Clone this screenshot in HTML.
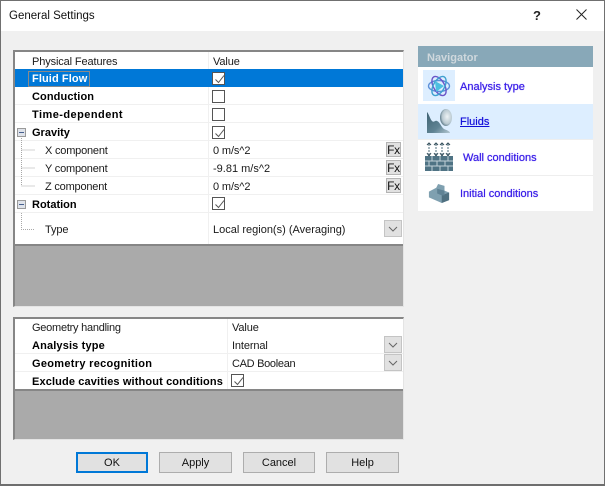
<!DOCTYPE html>
<html><head><meta charset="utf-8">
<style>
html,body{margin:0;padding:0;width:605px;height:486px;overflow:hidden;background:#f0f0f0}
body{position:relative;font-family:"Liberation Sans",sans-serif;font-size:11px;color:#1a1a1a}
#w{left:0;top:0;width:605px;height:486px;filter:blur(.3px)}
div,span,a{position:absolute;box-sizing:border-box}
.t{white-space:nowrap;line-height:14px;height:14px;letter-spacing:-.12px}
.b{font-weight:bold;color:#000;letter-spacing:.1px}
.l{height:1px;background:#f0f0f0}
.cb{width:13px;height:13px;border:1px solid #555;background:#fff}
.cb svg{position:absolute;left:1px;top:1px}
.fx{left:386px;width:15px;height:15px;background:#e1e1e1;border:1px solid #b4b4b4;font-size:12px;line-height:14px;text-align:center;color:#111;letter-spacing:-.3px}
.dd{left:384px;width:18px;height:17px;background:#e1e1e1;border:1px solid #c4c4c4}
.dd svg{position:absolute;left:3px;top:5px}
.btn{top:452px;height:21px;background:#e1e1e1;border:1px solid #adadad;text-align:center;line-height:20px;font-size:11px;color:#111}
.exp{left:17px;width:9px;height:9px;background:#dfe3ea;border:1px solid #9a9a9a}
.exp i{position:absolute;left:1px;top:3px;width:5px;height:1px;background:#47608f}
.nav{left:460px;font-size:11px;color:#3a1ee8;line-height:14px;height:14px;white-space:nowrap;text-shadow:0 0 .6px #3a1ee8}
</style></head><body><div id="w">
<!-- window chrome -->
<div style="left:0;top:0;width:605px;height:31px;background:#fff"></div>
<div style="left:0;top:0;width:605px;height:1px;background:#707070"></div>
<div style="left:0;top:0;width:1px;height:486px;background:#707070"></div>
<div style="left:604px;top:0;width:1px;height:486px;background:#707070"></div>
<div style="left:0;top:484px;width:605px;height:2px;background:#6e6e6e"></div>
<div class="t" style="left:9px;top:9px;font-size:11.5px;line-height:15px;height:15px;color:#111;letter-spacing:0">General Settings</div>
<div class="t" style="left:533px;top:8px;font-size:13px;line-height:15px;height:15px;color:#222;font-weight:bold;letter-spacing:0">?</div>
<svg style="position:absolute;left:576px;top:9px" width="11" height="11"><path d="M.5.5l10 10M10.5.5l-10 10" stroke="#222" fill="none"/></svg>

<!-- panel 1 -->
<div style="left:13px;top:50px;width:391px;height:257px;background:#aaa;border:2px solid #868686;border-right:1px solid #e4e4e4;border-bottom:1px solid #e4e4e4"></div>
<div style="left:15px;top:52px;width:388px;height:192px;background:#fff"></div>
<div style="left:15px;top:244px;width:388px;height:2px;background:#868686"></div>
<div style="left:15px;top:69px;width:388px;height:18px;background:#0078d7"></div>
<div style="left:208px;top:52px;width:1px;height:17px;background:#f0f0f0"></div>
<div style="left:208px;top:87px;width:1px;height:157px;background:#f0f0f0"></div>
<div class="l" style="left:15px;top:104px;width:388px"></div>
<div class="l" style="left:15px;top:122px;width:388px"></div>
<div class="l" style="left:15px;top:140px;width:388px"></div>
<div class="l" style="left:15px;top:158px;width:388px"></div>
<div class="l" style="left:15px;top:176px;width:388px"></div>
<div class="l" style="left:15px;top:194px;width:388px"></div>
<div class="l" style="left:15px;top:212px;width:388px"></div>
<!-- focus rectangle -->
<div style="left:28px;top:71px;width:62px;height:16px;border:1px solid #8a8a8a"></div>

<div class="t" style="left:32px;top:55px">Physical Features</div>
<div class="t b" style="left:32px;top:72px;color:#fff">Fluid Flow</div>
<div class="t b" style="left:32px;top:90px">Conduction</div>
<div class="t b" style="left:32px;top:108px;letter-spacing:.45px">Time-dependent</div>
<div class="t b" style="left:32px;top:126px;letter-spacing:0">Gravity</div>
<div class="t" style="left:45px;top:144px;letter-spacing:-.2px">X component</div>
<div class="t" style="left:45px;top:162px;letter-spacing:-.2px">Y component</div>
<div class="t" style="left:45px;top:180px;letter-spacing:-.2px">Z component</div>
<div class="t b" style="left:32px;top:198px;letter-spacing:0">Rotation</div>
<div class="t" style="left:45px;top:223px">Type</div>

<div class="t" style="left:213px;top:55px">Value</div>
<div class="t" style="left:213px;top:144px">0 m/s^2</div>
<div class="t" style="left:213px;top:162px;letter-spacing:0">-9.81 m/s^2</div>
<div class="t" style="left:213px;top:180px">0 m/s^2</div>
<div class="t" style="left:213px;top:223px;letter-spacing:0">Local region(s) (Averaging)</div>

<div class="cb" style="left:212px;top:72px"><svg width="11" height="11"><path d="M1.5 5.5l3 3 5.5-7" stroke="#555" fill="none"/></svg></div>
<div class="cb" style="left:212px;top:90px"></div>
<div class="cb" style="left:212px;top:108px"></div>
<div class="cb" style="left:212px;top:126px"><svg width="11" height="11"><path d="M1.5 5.5l3 3 5.5-7" stroke="#555" fill="none"/></svg></div>
<div class="cb" style="left:212px;top:197px"><svg width="11" height="11"><path d="M1.5 5.5l3 3 5.5-7" stroke="#555" fill="none"/></svg></div>

<div class="fx" style="top:142px">Fx</div>
<div class="fx" style="top:160px">Fx</div>
<div class="fx" style="top:178px">Fx</div>
<div class="dd" style="top:220px"><svg width="10" height="6"><path d="M1 1l4 4 4-4" stroke="#666" fill="none"/></svg></div>

<div class="exp" style="top:128px"><i></i></div>
<div class="exp" style="top:200px"><i></i></div>
<svg style="position:absolute;left:20px;top:137px" width="20" height="104">
<path d="M1.5 1V49M1.5 13H15M1.5 31H15M1.5 49H15M1.5 76V92.5H15" stroke="#a8a8a8" stroke-dasharray="1 1" fill="none"/>
</svg>

<!-- panel 2 -->
<div style="left:13px;top:317px;width:391px;height:123px;background:#aaa;border:2px solid #868686;border-right:1px solid #e4e4e4;border-bottom:1px solid #e4e4e4"></div>
<div style="left:15px;top:319px;width:388px;height:70px;background:#fff"></div>
<div style="left:15px;top:389px;width:388px;height:2px;background:#868686"></div>
<div style="left:227px;top:319px;width:1px;height:70px;background:#f0f0f0"></div>
<div class="l" style="left:15px;top:353px;width:388px"></div>
<div class="l" style="left:15px;top:371px;width:388px"></div>
<div class="t" style="left:32px;top:321px;letter-spacing:-.25px">Geometry handling</div>
<div class="t b" style="left:32px;top:339px;letter-spacing:.15px">Analysis type</div>
<div class="t b" style="left:32px;top:357px;letter-spacing:.3px">Geometry recognition</div>
<div class="t b" style="left:32px;top:375px;letter-spacing:.13px">Exclude cavities without conditions</div>
<div class="t" style="left:232px;top:321px">Value</div>
<div class="t" style="left:232px;top:339px">Internal</div>
<div class="t" style="left:232px;top:357px;letter-spacing:-.3px">CAD Boolean</div>
<div class="cb" style="left:231px;top:374px"><svg width="11" height="11"><path d="M1.5 5.5l3 3 5.5-7" stroke="#555" fill="none"/></svg></div>
<div class="dd" style="top:336px"><svg width="10" height="6"><path d="M1 1l4 4 4-4" stroke="#666" fill="none"/></svg></div>
<div class="dd" style="top:354px"><svg width="10" height="6"><path d="M1 1l4 4 4-4" stroke="#666" fill="none"/></svg></div>

<!-- buttons -->
<div class="btn" style="left:76px;width:72px;border:2px solid #0078d7;line-height:18px">OK</div>
<div class="btn" style="left:159px;width:73px">Apply</div>
<div class="btn" style="left:243px;width:72px">Cancel</div>
<div class="btn" style="left:326px;width:73px">Help</div>

<!-- navigator -->
<div style="left:418px;top:46px;width:175px;height:165px;background:#fff"></div>
<div style="left:418px;top:46px;width:175px;height:21px;background:#88a8b8"></div>
<div class="t" style="left:427px;top:51px;font-weight:bold;color:#cfd8dd;letter-spacing:0">Navigator</div>
<div style="left:418px;top:104px;width:175px;height:36px;background:#ddeeff"></div>
<div style="left:418px;top:175px;width:175px;height:1px;background:#eee"></div>
<div style="left:418px;top:139px;width:175px;height:1px;background:#eee"></div>
<div style="left:423px;top:70px;width:32px;height:31px;background:#ddeeff"></div>

<svg style="position:absolute;left:426px;top:72px" width="26" height="28" viewBox="0 0 26 28" fill="none">
<ellipse cx="13" cy="14" rx="10.5" ry="5.5" stroke="#5b8fd8" stroke-width="1.4"/>
<ellipse cx="13" cy="14" rx="10.5" ry="5.5" stroke="#6a55c8" stroke-width="1.4" transform="rotate(60 13 14)"/>
<ellipse cx="13" cy="14" rx="10.5" ry="5.5" stroke="#3fa0d0" stroke-width="1.4" transform="rotate(-60 13 14)"/>
<path d="M9 9l9 5-8 6z" fill="#4cc0e0"/>
</svg>
<svg style="position:absolute;left:426px;top:108px" width="28" height="28" viewBox="0 0 28 28">
<defs><linearGradient id="g" x1="0" y1="0" x2="1" y2="1"><stop offset="0" stop-color="#3f6272"/><stop offset=".6" stop-color="#5f8394"/><stop offset="1" stop-color="#b4c8d2"/></linearGradient>
<radialGradient id="h" cx=".6" cy=".45" r=".6"><stop offset="0" stop-color="#eef3f5"/><stop offset=".7" stop-color="#b8c8d0"/><stop offset="1" stop-color="#5f7c8a"/></radialGradient></defs>
<path d="M1 4V25H24C24 23 20 22 18 21 15 19 14 14 11 13 9 12 8 15 6 13 4 11 3 6 1 4Z" fill="url(#g)"/>
<ellipse cx="20" cy="9.5" rx="6" ry="8.5" fill="url(#h)"/>
</svg>
<svg style="position:absolute;left:424px;top:142px" width="30" height="32" viewBox="0 0 30 32" fill="none">
<path d="M5 2V13M12 2V13M18 2V13M24 2V13" stroke="#4f6f7e" stroke-dasharray="2 1"/>
<path d="M3 3l2-2 2 2M10 3l2-2 2 2M16 3l2-2 2 2M22 3l2-2 2 2M3 11l2 3 2-3M10 11l2 3 2-3M16 11l2 3 2-3M22 11l2 3 2-3" stroke="#37505c"/>
<rect x="1" y="14" width="28" height="15" fill="#4f7384"/>
<path d="M1 19H29M1 24H29M8 14V19M16 14V19M24 14V19M5 19V24M13 19V24M21 19V24M8 24V29M16 24V29M24 24V29" stroke="#c2d0d7"/>
</svg>
<svg style="position:absolute;left:428px;top:183px" width="22" height="21" viewBox="0 0 24 22" preserveAspectRatio="none">
<path d="M1 9L9 5 11 1 18 3V8L23 10V18L15 21 1 15Z" fill="#7fa0b0"/>
<path d="M15 13L23 10V18L15 21Z" fill="#4f7080"/>
<path d="M10 6L18 8V13L15 13 10 11Z" fill="#5f8294"/>
</svg>

<a class="nav" style="top:80px">Analysis type</a>
<a class="nav" style="top:115px;color:#1010d8;text-decoration:underline">Fluids</a>
<a class="nav" style="left:463px;top:151px">Wall conditions</a>
<a class="nav" style="top:187px">Initial conditions</a>
</div></body></html>
